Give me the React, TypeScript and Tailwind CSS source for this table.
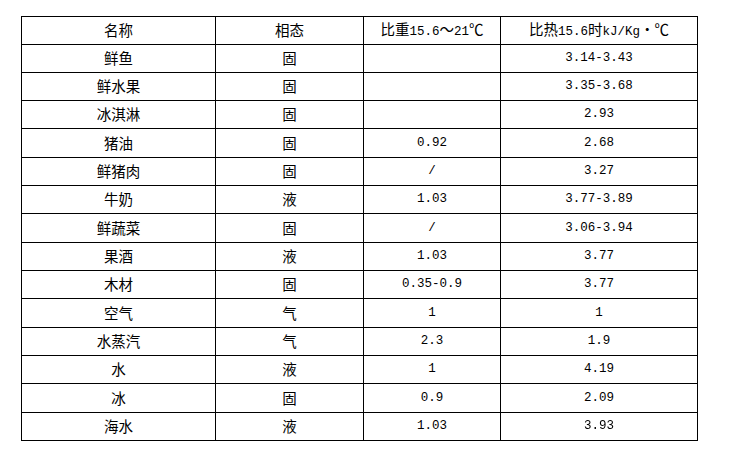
const cjk = "font-['Noto_Sans_CJK_SC','Noto_Sans',sans-serif] text-[14.5px]"
const mono = "font-['Liberation_Mono','Noto_Sans_CJK_SC',monospace] text-[12.5px]"

type Row = [string, string, string, string]

const rows: Row[] = [
  ["鲜鱼", "固", "", "3.14-3.43"],
  ["鲜水果", "固", "", "3.35-3.68"],
  ["冰淇淋", "固", "", "2.93"],
  ["猪油", "固", "0.92", "2.68"],
  ["鲜猪肉", "固", "/", "3.27"],
  ["牛奶", "液", "1.03", "3.77-3.89"],
  ["鲜蔬菜", "固", "/", "3.06-3.94"],
  ["果酒", "液", "1.03", "3.77"],
  ["木材", "固", "0.35-0.9", "3.77"],
  ["空气", "气", "1", "1"],
  ["水蒸汽", "气", "2.3", "1.9"],
  ["水", "液", "1", "4.19"],
  ["冰", "固", "0.9", "2.09"],
  ["海水", "液", "1.03", "3.93"],
]

// row heights including the bottom rule, header first
const heights = ["h-[28px]", "h-[28px]", "h-[28px]", "h-[28px]", "h-[29px]", "h-[28px]", "h-[28px]", "h-[29px]", "h-[28px]", "h-[28px]", "h-[29px]", "h-[28px]", "h-[28px]", "h-[29px]", "h-[28px]"]
const widths = ["w-[194px]", "w-[148px]", "w-[137px]", "w-[197px]"]

function Cell({ w, children, className = "" }: { w: string; children?: React.ReactNode; className?: string }) {
  return (
    <div className={`${w} shrink-0 flex items-center justify-center border-r border-black text-black leading-none ${className}`}>
      <span className="whitespace-nowrap">{children}</span>
    </div>
  )
}

export default function App() {
  return (
    <div className="w-[749px] h-[449px] bg-white overflow-hidden pt-[16px] pl-[21px]">
      <div className="w-[677px] border-l border-t border-black">
        {/* header */}
        <div className={`flex border-b border-black box-border ${heights[0]}`}>
          <Cell w={widths[0]} className={cjk}>名称</Cell>
          <Cell w={widths[1]} className={cjk}>相态</Cell>
          <Cell w={widths[2]} className={cjk}>
            比重<span className={mono}>15.6</span>～<span className={mono}>21</span>℃
          </Cell>
          <Cell w={widths[3]} className={cjk}>
            比热<span className={mono}>15.6</span>时<span className={mono}>kJ/Kg</span>・℃
          </Cell>
        </div>

        {rows.map((r, i) => {
          const last = i === rows.length - 1
          return (
            <div key={r[0]} className={`flex border-b border-black box-border ${heights[i + 1]}`}>
              <Cell w={widths[0]} className={cjk}>{r[0]}</Cell>
              <Cell w={widths[1]} className={cjk}>{r[1]}</Cell>
              <Cell w={widths[2]} className={mono}>{r[2]}</Cell>
              <Cell w={widths[3]} className={`${mono} ${last ? "text-[#c8c8c8] blur-[0.6px]" : ""}`}>{r[3]}</Cell>
            </div>
          )
        })}
      </div>
    </div>
  )
}
